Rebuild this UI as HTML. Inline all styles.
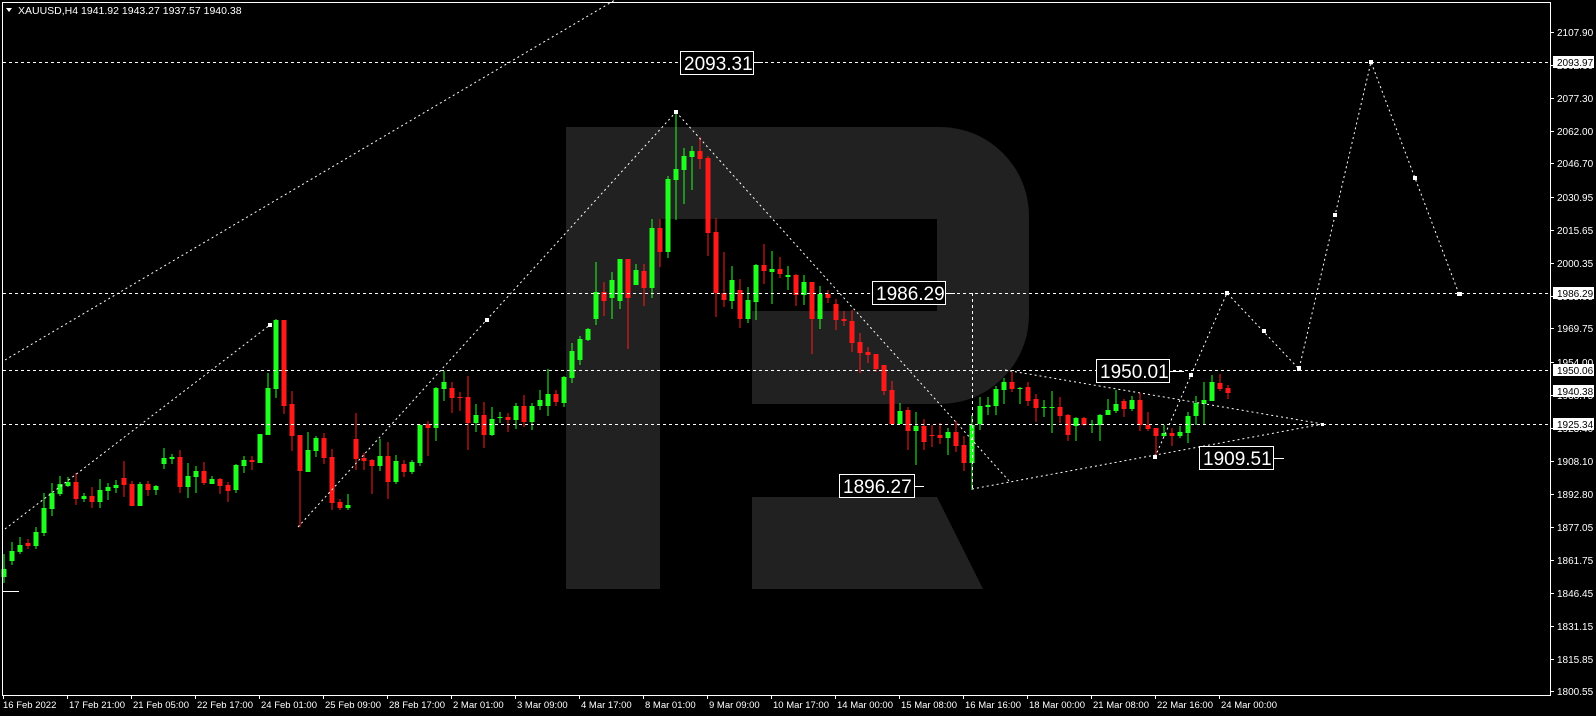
<!DOCTYPE html>
<html><head><meta charset="utf-8"><style>
html,body{margin:0;padding:0;background:#000;width:1596px;height:716px;overflow:hidden}
svg{display:block}
text{font-family:"Liberation Sans",sans-serif}
</style></head><body>
<svg id="s" width="1596" height="716" viewBox="0 0 1596 716" xmlns="http://www.w3.org/2000/svg">
<rect width="1596" height="716" fill="#000"/>
<path d="M566,127 H940 A89 89 0 0 1 1029,216 V315 A89 89 0 0 1 940,404 H752 V311 H937 V219 H660 V589 H566 Z" fill="#212121"/>
<path d="M752,497 H937 L983,589 H752 Z" fill="#212121"/>
<g id="c"></g>
<g stroke="#fff" stroke-width="1" fill="none" stroke-dasharray="3 3">
<line x1="3" y1="62.5" x2="1550" y2="62.5"/>
<line x1="3" y1="293.5" x2="1550" y2="293.5"/>
<line x1="3" y1="370.5" x2="1550" y2="370.5"/>
<line x1="3" y1="424.5" x2="1550" y2="424.5"/>
<line x1="972.5" y1="293" x2="972.5" y2="489"/>
</g>
<g stroke="#fff" stroke-width="1" fill="none" stroke-dasharray="2 3">
<line x1="5" y1="360" x2="615" y2="0"/>
<line x1="5" y1="529" x2="270" y2="325"/>
<line x1="298" y1="527" x2="676" y2="112"/>
<line x1="676" y1="112" x2="1010" y2="482"/>
<line x1="972" y1="489" x2="1323" y2="424"/>
<line x1="1005" y1="370" x2="1323" y2="424"/>
<polyline points="1155,457 1227,293 1299,369 1371,62 1459,294"/>
</g>
<g fill="#fff">
<rect x="268" y="323" width="4" height="4"/><rect x="485" y="318" width="4" height="4"/><rect x="674" y="110" width="4" height="4"/>
<rect x="1153" y="455" width="4" height="4"/><rect x="1189" y="373" width="4" height="4"/><rect x="1225" y="291" width="4" height="4"/>
<rect x="1262" y="329" width="4" height="4"/><rect x="1297" y="366" width="4" height="5"/><rect x="1333" y="213" width="4" height="4"/>
<rect x="1369" y="60" width="4" height="4"/><rect x="1413" y="176" width="4" height="4"/><rect x="1457" y="292" width="5" height="4"/>
<rect x="1321" y="423" width="3" height="3"/>
<rect x="3" y="591" width="16" height="1"/>
</g>
<g stroke="#fff" stroke-width="1">
<line x1="753" y1="62.5" x2="763" y2="62.5"/>
<line x1="945" y1="293.5" x2="955" y2="293.5"/>
<line x1="1169" y1="371.5" x2="1184" y2="371.5"/>
<line x1="914" y1="486.5" x2="924" y2="486.5"/>
<line x1="1273" y1="458.5" x2="1284" y2="458.5"/>
</g>
<g font-size="19" fill="#fff" stroke="none">
<rect x="680.5" y="51.5" width="73" height="23" fill="#000" stroke="#fff"/><text x="684" y="70">2093.31</text>
<rect x="872.5" y="281.5" width="73" height="23" fill="#000" stroke="#fff"/><text x="876" y="300">1986.29</text>
<rect x="1096.5" y="359.5" width="73" height="23" fill="#000" stroke="#fff"/><text x="1100" y="378">1950.01</text>
<rect x="839.5" y="474.5" width="75" height="23" fill="#000" stroke="#fff"/><text x="843" y="493">1896.27</text>
<rect x="1199.5" y="446.5" width="74" height="23" fill="#000" stroke="#fff"/><text x="1203" y="465">1909.51</text>
</g>
<rect x="2.5" y="2.5" width="1548" height="693" fill="none" stroke="#fff"/>
<g id="ax" font-size="10" fill="#fff"></g>
<polygon points="6,8 12,8 9,12" fill="#fff"/>
<text x="18" y="14" font-size="10.5" fill="#fff">XAUUSD,H4  1941.92 1943.27 1937.57 1940.38</text>
</svg>
<script>
var D=[
[4,1,569,577,554,583],[12,1,551,561,542,565],[20,1,545,552,537,554],[28,0,543,546,539,549],[36,1,532,546,527,549],[44,1,508,533,493,536],[52,1,493,509,483,516],[60,1,484,494,476,496],[68,1,482,486,477,487],[76,0,482,499,473,505],[84,1,496,499,493,502],[92,0,496,502,487,508],[100,1,490,502,479,508],[108,1,487,491,483,500],[116,1,485,488,480,493],[124,0,478,485,461,497],[132,0,484,506,481,506],[140,1,484,506,482,506],[148,0,484,490,481,496],[156,1,486,490,485,495],[164,1,458,464,448,469],[172,1,457,459,454,464],[180,0,457,487,450,493],[188,1,476,487,463,498],[196,1,471,477,466,493],[204,0,471,483,462,485],[212,1,479,484,476,484],[220,0,479,486,478,494],[228,0,485,491,482,502],[236,1,465,490,464,493],[244,1,460,466,456,473],[252,0,460,462,456,470],[260,1,434,463,434,463],[268,1,388,435,373,435],[276,1,320,389,319,398],[284,0,320,406,320,414],
[292,0,404,436,391,451],[300,0,435,471,435,527],[308,1,450,472,432,472],[316,1,438,451,436,457],[324,0,438,458,433,464],[332,0,457,503,449,510],[340,0,502,508,499,510],[348,1,505,508,494,510],[356,0,439,459,413,470],[364,0,458,461,453,470],[372,0,460,466,459,494],[380,1,456,466,439,471],[388,0,456,482,442,499],[396,1,461,482,455,484],[404,0,464,472,460,477],[412,1,462,472,460,474],[420,1,425,463,424,466],[428,0,424,428,421,456],[436,1,388,428,387,441],[444,1,382,389,371,401],[452,0,388,398,382,413],[460,0,397,398,392,411],[468,0,397,423,376,450],[476,1,415,423,404,432],[484,0,415,435,402,448],[492,1,419,435,407,436],[500,1,417,418,412,423],[508,0,417,420,413,432],[516,1,406,420,403,429],[524,0,406,422,395,427],[532,1,406,422,403,430],[540,1,400,406,390,410],[548,1,394,406,369,416],[556,0,394,402,390,406],[564,1,377,403,376,407],
[572,1,351,378,343,383],[580,1,339,360,336,365],[588,1,329,340,328,341],[596,1,292,319,262,325],[604,0,292,301,282,316],[612,1,280,298,272,319],[620,1,259,301,259,309],[628,0,259,298,259,349],[636,1,270,285,264,285],[644,0,271,288,264,306],[652,1,228,288,219,298],[660,0,228,252,219,267],[668,1,179,252,176,258],[676,1,169,180,112,220],[684,1,156,170,148,204],[692,1,151,157,146,190],[700,0,151,159,137,169],[708,0,158,233,156,256],[716,0,232,293,218,317],[724,0,293,300,252,307],[732,1,280,301,266,309],[740,0,290,319,279,328],[748,1,300,319,287,323],[756,1,265,302,264,320],[764,0,265,271,244,284],[772,1,269,272,251,304],[780,0,269,274,257,278],[788,1,275,277,266,290],[796,0,275,295,274,306],[804,1,282,295,275,305],[812,0,282,319,282,354],[820,1,294,319,286,329],[828,0,294,298,290,303],[836,0,304,320,299,330],
[844,0,319,321,311,326],[852,0,321,343,310,352],[860,0,342,353,333,373],[868,0,352,355,347,363],[876,0,354,369,354,372],[884,0,365,391,365,395],[892,0,390,424,381,424],[900,1,411,424,403,424],[908,0,410,431,407,450],[916,1,426,431,412,465],[924,0,426,442,419,450],[932,0,435,436,425,447],[940,0,435,438,423,444],[948,1,432,438,428,455],[956,0,432,446,421,452],[964,0,445,463,436,471],[972,1,425,463,415,490],[980,1,406,424,397,430],[988,1,405,407,397,415],[996,1,389,406,386,415],[1004,1,382,390,378,404],[1012,0,382,389,372,392],[1020,1,388,389,387,404],[1028,0,387,401,382,406],[1036,0,399,408,394,422],[1044,1,407,408,400,417],[1052,1,407,408,391,433],[1060,0,407,416,397,423],[1068,0,415,435,414,441],[1076,1,418,426,417,441],[1084,0,418,425,417,426],[1092,1,424,425,420,433],[1100,1,415,425,414,441],[1108,1,410,415,399,415],[1116,1,404,411,390,413],[1124,0,401,409,399,417],[1132,1,400,409,396,411],[1140,0,400,425,393,431],[1148,0,425,429,412,431],[1156,0,428,436,428,457],[1164,1,433,436,425,437],[1172,0,433,436,428,446],[1180,1,432,436,426,438],[1188,1,416,433,412,443],[1196,1,403,416,396,425],[1204,1,400,404,382,425],[1212,1,382,401,375,401],[1220,0,383,389,374,391],[1228,0,388,393,385,399]];
var NS="http://www.w3.org/2000/svg",g=document.getElementById("c");
function el(t,a,p){var e=document.createElementNS(NS,t);for(var k in a)e.setAttribute(k,a[k]);(p||g).appendChild(e);return e;}
D.forEach(function(d){var c=d[1]?"#1EFF1E":"#FF1A1A";
el("rect",{x:d[0]-0.5,y:d[4],width:1,height:Math.max(1,d[5]-d[4]),fill:c});
el("rect",{x:d[0]-2.5,y:d[2],width:5,height:Math.max(1,d[3]-d[2]),fill:c});});
var ax=document.getElementById("ax");
var L=["2107.90","2092.60","2077.30","2062.00","2046.70","2030.95","2015.65","2000.35","1985.05","1969.75","1954.00","1938.75","1923.40","1908.10","1892.80","1877.05","1861.75","1846.45","1831.15","1815.85","1800.55"];
function Y(v){return 62+(2093.97-v)*2.145;}
L.forEach(function(s){var y=Math.round(Y(parseFloat(s)));el("rect",{x:1550,y:y,width:4,height:1,fill:"#fff"},ax);var t=el("text",{x:1557,y:y+4},ax);t.textContent=s;});
[["2093.97",62],["1986.29",293],["1950.06",370],["1940.38",391],["1925.34",424]].forEach(function(a){el("rect",{x:1553,y:a[1]-6,width:41,height:12,fill:"#fff"},ax);var t=el("text",{x:1557,y:a[1]+4,fill:"#000"},ax);t.textContent=a[0];});
var T=["16 Feb 2022","17 Feb 21:00","21 Feb 05:00","22 Feb 17:00","24 Feb 01:00","25 Feb 09:00","28 Feb 17:00","2 Mar 01:00","3 Mar 09:00","4 Mar 17:00","8 Mar 01:00","9 Mar 09:00","10 Mar 17:00","14 Mar 00:00","15 Mar 08:00","16 Mar 16:00","18 Mar 00:00","21 Mar 08:00","22 Mar 16:00","24 Mar 00:00"];
T.forEach(function(s,i){var x=3+64*i;el("rect",{x:x,y:695,width:1,height:4,fill:"#fff"},ax);var t=el("text",{x:x+(i?2:0),y:708,"font-size":"9.5"},ax);t.textContent=s;});
</script>
</body></html>
